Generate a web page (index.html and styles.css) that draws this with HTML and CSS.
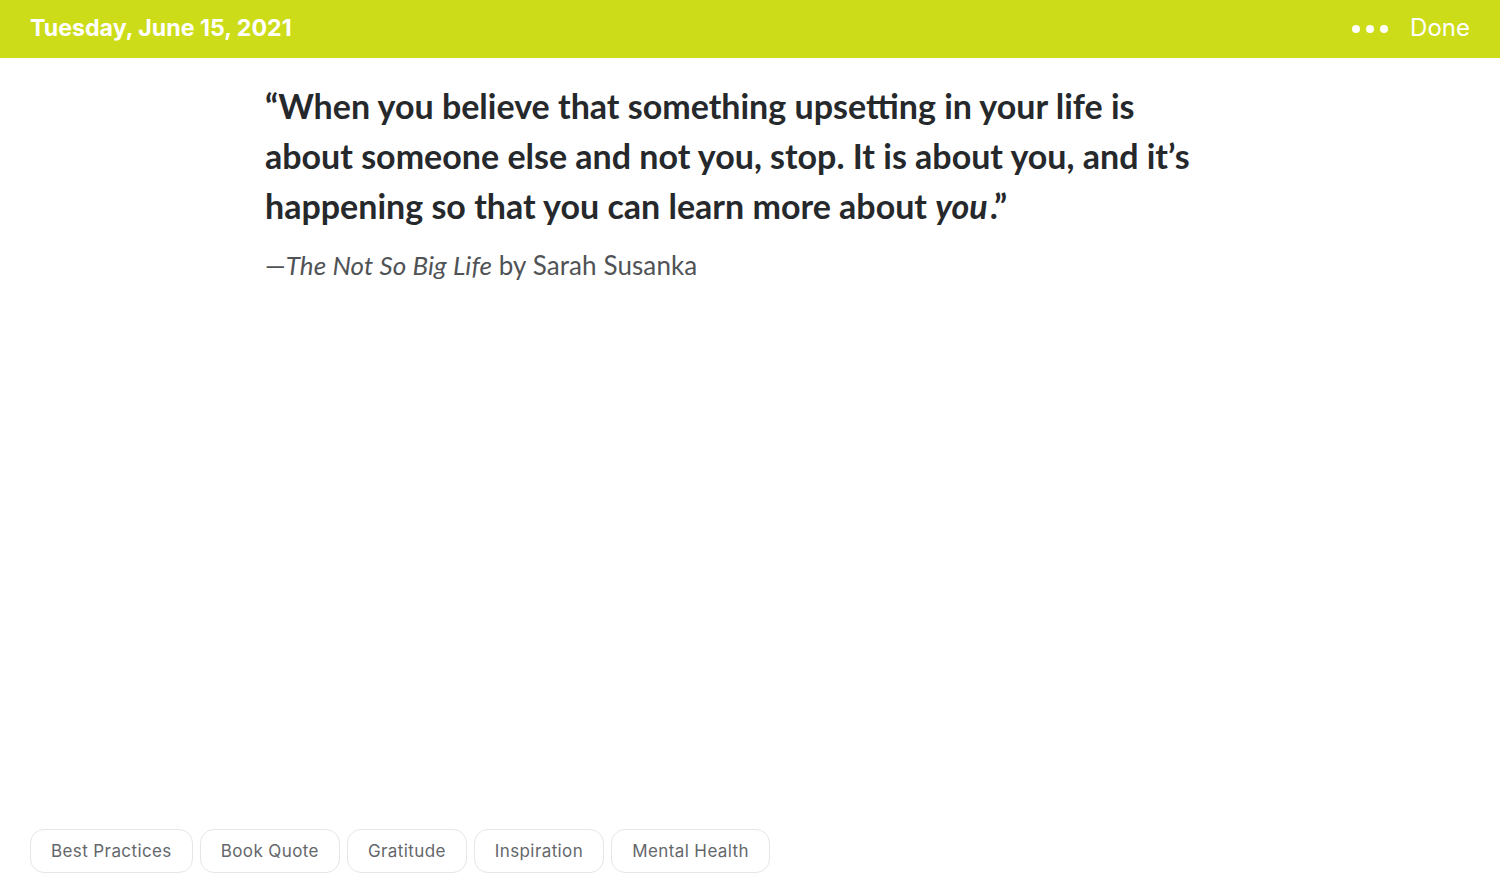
FILE: index.html
```html
<!DOCTYPE html>
<html lang="en">
<head>
    <meta charset="UTF-8">
    <meta name="viewport" content="width=device-width, initial-scale=1.0">
    <title>Journal entry</title>
    <link rel="stylesheet" href="styles.css">
</head>
<body>
    <div class="page">
        <header class="topbar">
            <span class="date">Tuesday, June 15, 2021</span>
            <div class="actions">
                <span class="more"><i></i><i></i><i></i></span>
                <span class="done">Done</span>
            </div>
        </header>

        <main class="entry">
            <p class="quote">“When you believe that something upsetting in your life is about someone else and not you, stop. It is about you, and it’s happening so that you can learn more about <em>you</em>.”</p>
            <p class="source">—<em>The Not So Big Life</em> by Sarah Susanka</p>
        </main>

        <footer class="tags">
            <span class="tag">Best Practices</span>
            <span class="tag">Book Quote</span>
            <span class="tag">Gratitude</span>
            <span class="tag">Inspiration</span>
            <span class="tag">Mental Health</span>
        </footer>
    </div>
</body>
</html>
```

FILE: styles.css
```css
html, body {
    margin: 0;
    padding: 0;
    background: #fff;
}

.page {
    height: 886px;
    display: flex;
    flex-direction: column;
}

.topbar {
    height: 58px;
    box-sizing: border-box;
    flex: none;
    background-color: #cddc19;
    display: flex;
    align-items: center;
    justify-content: space-between;
    padding: 0 30px 3px;
    color: #fff;
    font-family: Inter, "Noto Sans", sans-serif;
}

.date {
    font-size: 23.2px;
    font-weight: 700;
}

.actions {
    display: flex;
    align-items: center;
    gap: 22px;
}

.more {
    display: flex;
    gap: 6px;
    padding-top: 2px;
}
.more i {
    width: 8px;
    height: 8px;
    border-radius: 50%;
    background: #fff;
}

.done {
    font-size: 24px;
    font-weight: 400;
}

.entry {
    flex: 1;
    width: 950px;
    margin: 0 auto 0 265px;
    padding-top: 23px;
    font-family: Lato, "Open Sans", sans-serif;
}

.quote {
    margin: 0;
    font-size: 34px;
    line-height: 50px;
    font-weight: 700;
    color: #26292c;
}

.quote em {
    padding-right: 2px;
}

.source {
    margin: 16px 0 0;
    font-size: 26px;
    line-height: 36px;
    letter-spacing: 0.1px;
    color: #505356;
}

.tags {
    flex: none;
    display: flex;
    gap: 7px;
    padding: 0 30px 13px;
    font-family: Inter, "Noto Sans", sans-serif;
}

.tag {
    height: 44px;
    box-sizing: border-box;
    display: flex;
    align-items: center;
    padding: 0 20px;
    border: 1px solid #e6e6e6;
    border-radius: 14px;
    font-size: 17px;
    color: #64676b;
    letter-spacing: 0.4px;
}
```
